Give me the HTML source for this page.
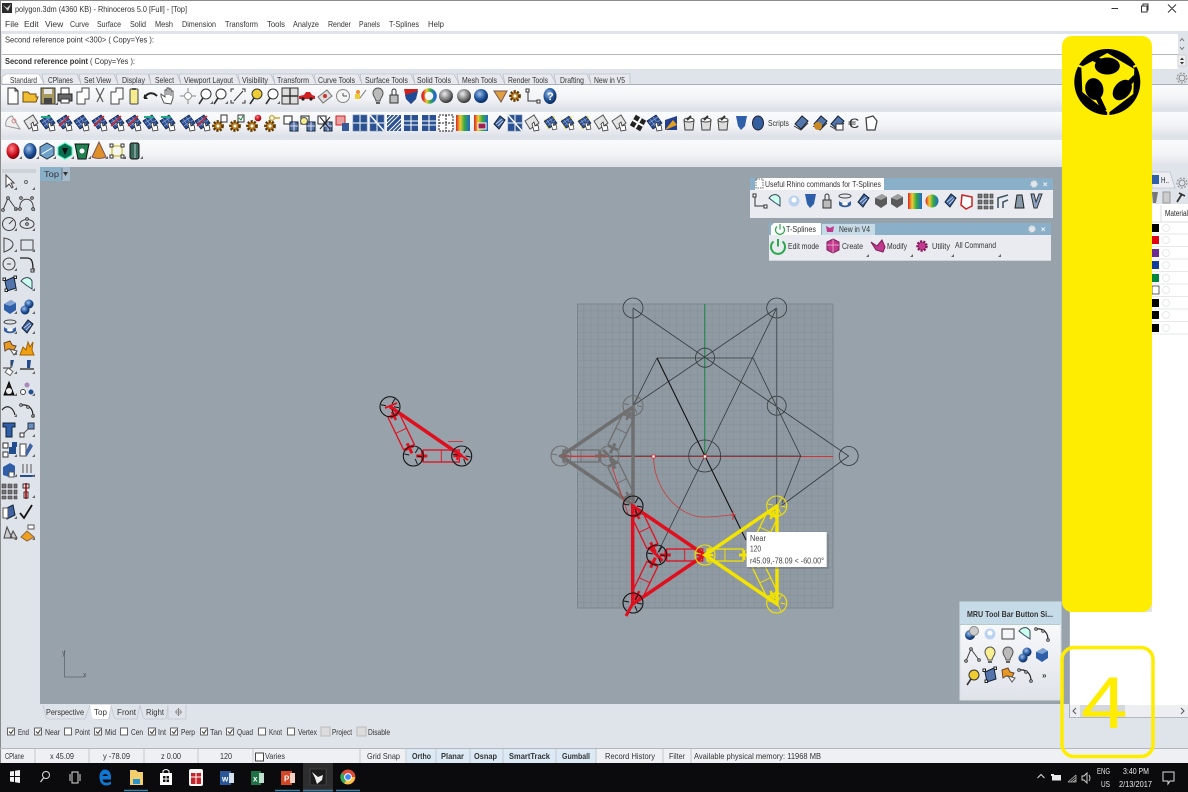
<!DOCTYPE html>
<html lang="en">
<head>
<meta charset="utf-8">
<title>polygon.3dm - Rhinoceros 5.0</title>
<style>
html,body{margin:0;padding:0;background:#dfe3ea;width:1188px;height:792px;overflow:hidden}
svg{display:block;filter:blur(.35px)}
text{font-family:"Liberation Sans",sans-serif;font-size:8.5px;fill:#333}
.b{font-weight:bold}
.w{fill:#e8e8e8}
</style>
</head>
<body>
<svg xmlns="http://www.w3.org/2000/svg" width="1188" height="792" viewBox="0 0 1188 792">
<defs>
<linearGradient id="tb" x1="0" y1="0" x2="0" y2="1"><stop offset="0" stop-color="#fafbfc"/><stop offset=".55" stop-color="#f2f3f6"/><stop offset="1" stop-color="#dce0e7"/></linearGradient>
<linearGradient id="mr" x1="0" y1="0" x2="0" y2="1"><stop offset="0" stop-color="#fff"/><stop offset="1" stop-color="#dfe3ea"/></linearGradient>
<radialGradient id="gs" cx=".4" cy=".35" r=".7"><stop offset="0" stop-color="#eee"/><stop offset=".6" stop-color="#777"/><stop offset="1" stop-color="#222"/></radialGradient>
<radialGradient id="bs" cx=".4" cy=".35" r=".7"><stop offset="0" stop-color="#9cc0ea"/><stop offset=".6" stop-color="#1d4f96"/><stop offset="1" stop-color="#0a2350"/></radialGradient>
<radialGradient id="rs" cx=".4" cy=".35" r=".7"><stop offset="0" stop-color="#f88"/><stop offset=".6" stop-color="#d01020"/><stop offset="1" stop-color="#600"/></radialGradient>
<linearGradient id="rb" x1="0" y1="0" x2="1" y2="0"><stop offset="0" stop-color="#d22"/><stop offset=".3" stop-color="#ec3"/><stop offset=".6" stop-color="#3a4"/><stop offset="1" stop-color="#26c"/></linearGradient>
<pattern id="gp" x="577" y="304" width="7.12" height="7.12" patternUnits="userSpaceOnUse"><path d="M7.12 0V7.12H0" fill="none" stroke="#7f8a93" stroke-width=".8"/></pattern>

<path id="tri" d="M5 8H8V5Z" fill="#666"/>
<g id="doc"><path d="M-5-8H2L5-5V8H-5Z" fill="#fff" stroke="#333"/><path d="M2-8V-5H5" fill="none" stroke="#333"/></g>
<path id="fold" d="M-7 6V-4H-2L0-2H6V1H8L6 6Z" fill="#f0bc30" stroke="#6a4c10"/>
<g id="save"><rect x="-7" y="-8" width="14" height="16" fill="#a79a60" stroke="#333"/><rect x="-4" y="-7" width="8" height="5" fill="#e8e8e8"/><rect x="-4" y="2" width="8" height="6" fill="#444"/><use href="#tri" x="2" y="1"/></g>
<g id="prt"><rect x="-7" y="-2" width="14" height="7" fill="#666" stroke="#222"/><rect x="-4" y="-8" width="8" height="6" fill="#fff" stroke="#333"/><rect x="-4" y="3" width="8" height="4" fill="#fff" stroke="#333"/></g>
<g id="cp2"><path d="M-6-4H2V8H-6Z" fill="#fff" stroke="#444"/><path d="M-1-4V-8H6V3H2" fill="#fff" stroke="#444"/></g>
<path id="cut" d="M-4-8L3 6M4-8L-3 6" stroke="#555" stroke-width="1.200" fill="none"/>
<g id="pst"><rect x="-4" y="-7" width="8" height="15" rx="1" fill="#f6ec90" stroke="#444"/><rect x="-2" y="-8" width="4" height="2" fill="#555"/></g>
<g id="und"><path d="M-7 2C-3-4 2-4 6 0" stroke="#222" stroke-width="2" fill="none"/><path d="M-7-2V3H-3Z" fill="#222"/></g>
<path id="hand" d="M-4 7L-7 0V-2L-3 1V-6H-1V-1 -8H1V-1 -7H3V0 -5H5V2L3 8Z" fill="#fff" stroke="#444" stroke-width=".9"/>
<g id="pan"><path d="M0-8V8M-8 0H8" stroke="#888"/><circle r="3.500" fill="#fff" stroke="#999"/></g>
<g id="mag"><circle cx="1" cy="-2" r="5" fill="#fff" stroke="#333"/><path d="M-2 2L-6 8" stroke="#333" stroke-width="1.600"/><use href="#tri"/></g>
<g id="ext"><path d="M-7-4V-7H-4M4-7H7V-4M7 4V7H4M-4 7H-7V4" stroke="#333" fill="none"/><path d="M-4 5L5-5" stroke="#333"/></g>
<g id="magy"><circle cx="1" cy="-2" r="5" fill="#ec3" stroke="#333"/><path d="M-2 2L-6 8" stroke="#333" stroke-width="1.600"/></g>
<g id="win4"><rect x="-8" y="-8" width="16" height="16" fill="#ddd" stroke="#333"/><path d="M0-8V8M-8 0H8" stroke="#333" stroke-width="1.400"/></g>
<g id="car"><path d="M-8 3V0L-3-1-1-4H3L5-1 8 0V3Z" fill="#d02020"/><circle cx="-4" cy="3" r="1.600" fill="#222"/><circle cx="4" cy="3" r="1.600" fill="#222"/></g>
<g id="flat"><path d="M-7 1L2-6 7 0-2 7Z" fill="#ddd" stroke="#777"/><circle r="2" fill="#c33"/></g>
<g id="clk"><circle r="6.500" fill="#f4f4f4" stroke="#888"/><path d="M0 0H4M0 0V-3" stroke="#555"/></g>
<g id="lit"><rect x="-5" y="-2" width="5" height="5" fill="#ec3"/><path d="M0 2L6-6" stroke="#777"/><circle cx="-2" cy="-4" r="2" fill="#e83"/></g>
<g id="blb"><path d="M-5-3A5 5 0 1 1 5-3C5 1 2 2 2 5H-2C-2 2-5 1-5-3Z" fill="#bbb" stroke="#555"/><path d="M-2 7H2" stroke="#333" stroke-width="1.500"/></g>
<g id="blby"><path d="M-5-3A5 5 0 1 1 5-3C5 1 2 2 2 5H-2C-2 2-5 1-5-3Z" fill="#f8ee90" stroke="#555"/><path d="M-2 7H2" stroke="#333" stroke-width="1.500"/></g>
<g id="lock"><rect x="-4" y="-1" width="8" height="8" fill="#bbb" stroke="#333"/><path d="M-2-1V-5A2 2 0 0 1 2-5V-1" fill="none" stroke="#333"/></g>
<g id="sh"><path d="M-7-7H7L5 3 0 8-5 3Z" fill="#c22"/><path d="M-6-1L7-5 5 3 0 8-5 3Z" fill="#1e4b96"/></g>
<g id="whl"><circle r="6" fill="none" stroke="url(#rb)" stroke-width="3.500"/></g>
<circle id="sph" r="7" fill="url(#gs)"/>
<g id="bsp"><circle r="7" fill="url(#bs)"/></g>
<ellipse id="rsp" rx="6.500" ry="8" fill="url(#rs)"/>
<ellipse id="bsq" rx="6.500" ry="8" fill="url(#bs)"/>
<g id="gear"><circle r="4.500" fill="#b97d20" stroke="#5e3a08" stroke-width="2.800" stroke-dasharray="2 1.300"/><circle r="1.500" fill="#fff"/></g>
<g id="gdoc"><use href="#gear" x="-2" y="3"/><rect x="1" y="-8" width="6" height="7" fill="#fff" stroke="#333"/></g>
<g id="gck"><use href="#gear" x="-2" y="3"/><rect x="1" y="-8" width="6" height="7" fill="#fff" stroke="#333"/><path d="M2-5L4-3 6-7" stroke="#1a8a3a" fill="none"/></g>
<g id="gbl"><use href="#gear" x="-2" y="3"/><circle cx="4" cy="-5" r="3.300" fill="url(#rs)"/></g>
<g id="gky"><use href="#gear" x="-2" y="3"/><circle cx="0" cy="-5" r="2.400" fill="none" stroke="#c9a830" stroke-width="1.300"/><path d="M2-5H8" stroke="#c9a830" stroke-width="1.500"/></g>
<path id="cone" d="M-6-5H7L1 6Z" fill="#e0a040" stroke="#755"/>
<g id="pts"><path d="M-5-5V5H5" stroke="#333" fill="none"/><rect x="-7" y="-7" width="3" height="3" fill="#fff" stroke="#333"/><rect x="4" y="4" width="3" height="3" fill="#fff" stroke="#333"/></g>
<g id="hlp"><ellipse rx="6.500" ry="8" fill="url(#bs)"/></g>
<g id="circ"><path d="M-1-7A8 8 0 0 0-7 3L7 6 -1-7Z" fill="#f0f0f0" stroke="#999"/><circle cx="1" cy="-2" r="2" fill="none" stroke="#d88"/></g>
<g id="srg"><path d="M-7-2L2-8 7 0-2 6Z" fill="#e4e4e4" stroke="#555"/><path d="M0 1L2 8 7 7 6 2 3 3 2-1Z" fill="#fff" stroke="#333" stroke-width=".8"/></g>
<g id="srf"><path d="M-8-2L1-8 7 0-2 6Z" fill="#2c4f96" stroke="#0d1f44" stroke-width=".8"/><path d="M-5-4L1 4M-2-6L4 2M-6 0L3-6M-4 3L5-3" stroke="#9fb6dc" stroke-width=".6"/><path d="M0 1L2 8 7 7 6 2 3 3 2-1Z" fill="#fff" stroke="#333" stroke-width=".8"/></g>
<g id="srr"><use href="#srf"/><path d="M-6 3L4-7" stroke="#d22" stroke-width="1.500"/></g>
<g id="srn"><use href="#srf"/><path d="M-7-6H3" stroke="#2a8" stroke-width="2"/></g>
<g id="sry"><path d="M-7-3L3-7 6 2-3 6Z" fill="#e8de30"/><use href="#srf" transform="scale(.85)"/></g>
<g id="grd"><rect x="-7" y="-8" width="14" height="16" fill="#2a5192" stroke="#6c85b0" stroke-width=".6"/><path d="M0-8V8M-7 0H7" stroke="#fff"/></g>
<g id="grd2"><use href="#grd"/><path d="M-7-8L7 8" stroke="#fff" stroke-width="1.500"/></g>
<g id="grd3"><rect x="-7" y="-8" width="14" height="16" fill="#2a5192"/><path d="M-7-4L-3-8M-7 0L1-8M-7 4L5-8M-5 8L7-4M-1 8L7 0M3 8L7 4" stroke="#fff"/></g>
<g id="grd4"><rect x="-7" y="-8" width="14" height="16" fill="#2a5192"/><path d="M-7-2H7M-7 2H7M0-8V8" stroke="#fff"/></g>
<g id="grd5"><rect x="-7" y="-8" width="14" height="16" fill="#fff" stroke="#222" stroke-dasharray="2 1"/><path d="M0-8V8M-7 0H7" stroke="#222" stroke-dasharray="2 1"/></g>
<rect id="rain" x="-7" y="-8" width="14" height="16" fill="url(#rb)"/>
<g id="rain2"><use href="#rain"/><rect x="-3" y="0" width="8" height="6" fill="#a12050" stroke="#fff"/></g>
<g id="dg"><rect x="-7" y="-7" width="8" height="8" fill="#fff" stroke="#222"/><rect x="-1" y="-1" width="8" height="9" fill="#5474ac" stroke="#123"/><path d="M3-1V8M-1 3H7" stroke="#dde"/></g>
<g id="dgb"><use href="#dg"/><circle cx="-4" cy="-2" r="3.500" fill="#f6ec90" stroke="#555"/></g>
<g id="dgk"><use href="#dg"/><path d="M-5 6L5-6M-5-6L5 6" stroke="#222"/></g>
<g id="dgr"><rect x="-7" y="-7" width="9" height="9" fill="#e8a0a0" stroke="#c22"/><rect x="-1" y="0" width="7" height="8" fill="#345a9c"/></g>
<g id="chk"><rect x="-6" y="-6" width="12" height="12" fill="#222" transform="rotate(30)"/><path d="M-6 0H6M0-6V6" stroke="#fff" stroke-width="2" transform="rotate(30)"/></g>
<g id="fl"><path d="M-6 7V-3L6-7V7Z" fill="#243f90"/><path d="M-6 7L2-3 6 2" fill="#e2a020"/></g>
<g id="bkt"><path d="M-5-3H5L4 7H-4Z" fill="#ddd" stroke="#444"/><ellipse cy="-3" rx="5" ry="2" fill="#fff" stroke="#444"/><path d="M-2-3L2-7" stroke="#333" stroke-width="2"/></g>
<g id="vv"><path d="M-5-7H6L4 3 0 7-3 3Z" fill="#2f5fa8"/></g>
<ellipse id="vo" rx="5.500" ry="7" fill="#345f9f" stroke="#223"/>
<g id="pgn"><path d="M-5-5L2-7 6-2 4 7H-4Z" fill="#fff" stroke="#444" stroke-width="1.300"/></g>
<g id="hex"><path d="M0-8L7-4V4L0 8-7 4V-4Z" fill="#6ea0c8" stroke="#234"/><path d="M-5 3L5-3" stroke="#fff"/></g>
<g id="gsh"><path d="M0-8L7-4V4L0 8-7 4V-4Z" fill="#0e6b50" stroke="#3fb"/><path d="M-3-3H3L0 4Z" fill="#111"/></g>
<g id="gdc"><path d="M-7-7H7L4 8H-4Z" fill="#208050" stroke="#111"/><circle r="2.500" fill="#fff"/></g>
<g id="yrc"><path d="M-5-5H5V5H-5Z" fill="none" stroke="#d8c840" stroke-width="1.500"/><g fill="#fff" stroke="#333"><rect x="-7" y="-7" width="3" height="3"/><rect x="4" y="-7" width="3" height="3"/><rect x="-7" y="4" width="3" height="3"/><rect x="4" y="4" width="3" height="3"/></g></g>
<g id="cyl"><rect x="-4" y="-8" width="9" height="16" rx="2" fill="#3a6a5a" stroke="#111"/><path d="M1-7V7" stroke="#bcd"/></g>
<g id="scr1"><path d="M-6 1L1-7 7-2 0 6Z" fill="#5474ac" stroke="#123"/><path d="M-7 3L0 7 7 0" stroke="#333" fill="none"/></g>
<g id="scr2"><use href="#scr1"/><circle cx="-2" cy="3" r="4" fill="#c98a25"/></g>
<g id="scr3"><use href="#scr1"/><rect x="-1" y="1" width="7" height="6" fill="#fff" stroke="#333"/></g>

<g id="arrow"><path d="M-3-7V5L0 2 3 6 4 5 2 1H5Z" fill="#fff" stroke="#444"/></g>
<g id="pl"><path d="M-7 6L-2-6 6 5" fill="none" stroke="#444"/><g fill="#fff" stroke="#333"><circle cx="-7" cy="6" r="1.300"/><circle cx="-2" cy="-6" r="1.300"/><circle cx="6" cy="5" r="1.300"/></g></g>
<g id="cv"><path d="M-7 5C-9-8 8-8 6 5" fill="none" stroke="#444"/><g fill="#fff" stroke="#333"><circle cx="-7" cy="5" r="1.300"/><circle cx="-6" cy="-6" r="1.300"/><circle cx="5" cy="-6" r="1.300"/><circle cx="6" cy="5" r="1.300"/></g></g>
<g id="cir"><circle r="6.500" fill="none" stroke="#444"/><path d="M0 0L4-4" stroke="#444"/></g>
<g id="ell"><ellipse rx="7" ry="4.500" fill="none" stroke="#444"/><circle r="1.300" fill="#fff" stroke="#333"/><circle cx="0" cy="-5" r="1.300" fill="#fff" stroke="#333"/></g>
<path id="arcc" d="M-6-7C6-5 6 3-6 7Z" fill="none" stroke="#444"/>
<rect id="rct" x="-6" y="-5" width="12" height="10" fill="none" stroke="#444"/>
<g id="cdot"><circle r="6" fill="none" stroke="#444"/><path d="M-2 0H2" stroke="#444"/></g>
<g id="fil"><path d="M-7-6H0C5-6 6-2 6 6" fill="none" stroke="#222" stroke-width="1.300"/><rect x="4" y="5" width="3" height="3" fill="#fff" stroke="#333"/></g>
<g id="sfp"><path d="M-5-3L4-7 6 4-3 7Z" fill="#5474ac" stroke="#123"/><g fill="#fff" stroke="#222"><rect x="-7" y="-6" width="2.500" height="2.500"/><rect x="4" y="-8" width="2.500" height="2.500"/><rect x="-5" y="5" width="2.500" height="2.500"/></g></g>
<g id="sfw"><path d="M-6-3C-2-8 3-7 5-3V5L-1 1Z" fill="#cfe" stroke="#345"/><path d="M-6-3L-1 1 5 5" fill="#4a6ea8"/></g>
<g id="cube"><path d="M-6-3L1-7 6-4V3L0 7-6 3Z" fill="#2f5fa8"/><path d="M-6-3L1-7 6-4 0-1Z" fill="#7ea3d0"/></g>
<g id="spp"><circle cx="2" cy="-3" r="4.500" fill="url(#bs)"/><circle cx="-2" cy="3" r="4.500" fill="url(#bs)"/></g>
<g id="cyb"><ellipse cy="-5" rx="6" ry="2" fill="none" stroke="#444"/><path d="M-6 0V4C-3 7 3 7 6 4V0C3 3-3 3-6 0Z" fill="#345f9f"/><ellipse cy="3" rx="3" ry="1.500" fill="#fff"/></g>
<g id="sbl"><path d="M-5 1L1-7 6-3 0 6Z" fill="#3f63a4" stroke="#123"/><path d="M-3 1L3-4M-1 3L4-2" stroke="#bcd"/></g>
<g id="pz"><path d="M-6-5L0-7 2-3 6-2 4 2-2 1-5 3Z" fill="#e89a20" stroke="#643"/><path d="M0 1L4 7 7 3Z" fill="#fff" stroke="#555"/></g>
<path id="brs" d="M-7 7L-4-1-1 2 1-6 3-1 6-6 5 2 7 7Z" fill="#f0a010" stroke="#a06000"/>
<g id="spl"><path d="M-7 1H1M1-7V1" stroke="#333"/><path d="M1-7H4L2 1Z" fill="#234e8e"/><rect x="-1" y="2" width="6" height="5" fill="#fff" stroke="#666" transform="rotate(35)"/></g>
<g id="spl2"><path d="M-7 2H7" stroke="#333" stroke-width="1.400"/><path d="M0-7H4L3 1H0Z" fill="#234e8e"/></g>
<g id="drk"><path d="M-5 6L0-7 5 6Z" fill="#222" stroke="#000"/><circle cy="2" r="3" fill="#eee"/></g>
<g id="dts"><circle cy="-4" r="2.500" fill="#a8b"/><circle cx="-4" cy="3" r="2.500" fill="#fff" stroke="#444"/><circle cx="4" cy="3" r="2.500" fill="#234e8e"/></g>
<path id="cur" d="M-7 0C-2-6 4-3 6 5" fill="none" stroke="#222" stroke-width="1.200"/>
<g id="cur2"><path d="M-6-5C2-6 6-1 6 6" fill="none" stroke="#222" stroke-width="1.200"/><g fill="#fff" stroke="#333"><circle cx="-6" cy="-5" r="1.300"/><circle cx="1" cy="-3" r="1.300"/><circle cx="6" cy="6" r="1.300"/></g></g>
<path id="tt" d="M-6-7H6V-3H3V7H-3V-3H-6Z" fill="#2f5fa8" stroke="#123"/>
<g id="scl"><path d="M-5 5L4-4" stroke="#555"/><rect x="-7" y="3" width="4" height="4" fill="#fff" stroke="#333"/><rect x="1" y="-7" width="6" height="6" fill="#6a8fc0" stroke="#234"/></g>
<g id="grp"><g fill="#fff" stroke="#333"><rect x="-7" y="-7" width="5" height="5"/><rect x="-7" y="2" width="5" height="5"/></g><rect x="-1" y="-3" width="7" height="7" fill="#234e8e"/><rect x="2" y="-8" width="5" height="5" fill="#234e8e"/></g>
<g id="cpb"><rect x="-7" y="-6" width="6" height="12" fill="#fff" stroke="#444"/><path d="M0 6L6-4 3-7-2 3Z" fill="#3f63a4"/></g>
<g id="cbg"><path d="M-6-3L1-7 6-4V5L0 7-6 5Z" fill="#2f5fa8"/><rect x="0" y="2" width="5" height="5" fill="#fff" stroke="#555"/></g>
<g id="ups"><path d="M-7 5H7L5 7H-7Z" fill="#234e8e"/><path d="M-4 3V-6M0 3V-6M4 3V-6" stroke="#555"/></g>
<path id="arr" d="M-7-7H-3V-3H-7ZM-1-7H3V-3H-1ZM5-7H8V-3H5ZM-7-1H-3V3H-7ZM-1-1H3V3H-1ZM5-1H8V3H5ZM-7 5H-3V8H-7ZM-1 5H3V8H-1ZM5 5H8V8H5Z" fill="#777" stroke="#333" stroke-width=".6"/>
<g id="rth"><path d="M0-8V8" stroke="#d22" stroke-width="2"/><rect x="-3" y="-7" width="6" height="4" fill="none" stroke="#333"/><rect x="-2" y="1" width="4" height="6" fill="none" stroke="#333"/></g>
<g id="bbx"><path d="M-5-3L3-7 5 3-3 7Z" fill="#3f63a4" stroke="#123"/><rect x="-7" y="-4" width="5" height="10" fill="#fff" stroke="#555"/></g>
<path id="ck" d="M-6 1L-2 6 6-7" fill="none" stroke="#111" stroke-width="1.800"/>
<g id="gsh2"><path d="M-6 5L-3-6 2 5ZM0 5L3-2 7 5Z" fill="#ccc" stroke="#444"/></g>
<g id="ord"><path d="M0-2L7 4 0 8-6 4Z" fill="#f0a020" stroke="#864"/><rect x="1" y="-8" width="6" height="4" fill="#fff" stroke="#555"/></g>
<g id="sbb"><circle cx="-2" cy="1" r="5" fill="url(#bs)"/><circle cx="2" cy="-3" r="4.500" fill="#ccc" stroke="#888"/></g>
<g id="sbw"><circle r="5.500" fill="#bcd3f0"/><circle cy="-1" r="2.500" fill="#fff"/></g>
<g id="nd"><circle r="10" fill="none" stroke="currentColor" stroke-width="1.100"/><path d="M-9-2L-4-1M5-8L2-3M4 8L2 3M9 1L4 0" stroke="currentColor" stroke-width="1"/></g>
<g id="am" fill="none" stroke="currentColor"><rect x="10" y="-6" width="36" height="12" stroke-width="1.300"/><path d="M28-6V6" stroke-width=".9"/><path d="M3 0H14" stroke-width="3"/><path d="M9-5V5" stroke-width="2.500"/><path d="M40 0H49" stroke-width="2.500"/><path d="M44-4V4" stroke-width="2"/></g>
<g id="unit"><use href="#am"/><use href="#am" transform="rotate(115.800)"/><use href="#am" transform="rotate(-115.800)"/><path d="M48 0L-24-49V49Z" fill="none" stroke="currentColor" stroke-width="3.500"/><path d="M-6-6L6 6" stroke="currentColor" stroke-width="3"/></g>
</defs>

<!-- chrome -->
<rect width="1188" height="792" fill="#dfe3ea"/>
<rect width="1188" height="31" fill="#fff"/>
<rect width="1188" height="1" fill="#8b8b8b"/>
<rect x="0" y="0" width="1" height="763" fill="#8b8b8b"/>
<rect x="2" y="3" width="10" height="10" fill="#2a2a2a"/><path d="M3 5L7 8 11 4 8 11Z" fill="#ddd"/>
<text x="15" y="12" textLength="172" lengthAdjust="spacingAndGlyphs">polygon.3dm (4360 KB) - Rhinoceros 5.0 [Full] - [Top]</text>
<path d="M1111.500 8.500H1118M1141.500 6H1147V12H1141.500ZM1143 6V4H1148V10H1147M1168 4.500L1176 12.500M1176 4.500L1168 12.500" fill="none" stroke="#333"/>
<text x="5" y="27">File</text><text x="24" y="27">Edit</text><text x="45" y="27">View</text><text x="70" y="27" textLength="19" lengthAdjust="spacingAndGlyphs">Curve</text><text x="97" y="27" textLength="24" lengthAdjust="spacingAndGlyphs">Surface</text><text x="130" y="27" textLength="16" lengthAdjust="spacingAndGlyphs">Solid</text><text x="155" y="27" textLength="18" lengthAdjust="spacingAndGlyphs">Mesh</text><text x="182" y="27" textLength="34" lengthAdjust="spacingAndGlyphs">Dimension</text><text x="225" y="27" textLength="33" lengthAdjust="spacingAndGlyphs">Transform</text><text x="267" y="27" textLength="18" lengthAdjust="spacingAndGlyphs">Tools</text><text x="293" y="27" textLength="26" lengthAdjust="spacingAndGlyphs">Analyze</text><text x="328" y="27" textLength="23" lengthAdjust="spacingAndGlyphs">Render</text><text x="359" y="27" textLength="21" lengthAdjust="spacingAndGlyphs">Panels</text><text x="389" y="27" textLength="30" lengthAdjust="spacingAndGlyphs">T-Splines</text><text x="428" y="27" textLength="16" lengthAdjust="spacingAndGlyphs">Help</text>

<rect x="2" y="34" width="1176" height="20" fill="#fff"/>
<rect x="2" y="54" width="1176" height="1" fill="#b4b8be"/>
<rect x="2" y="55" width="1176" height="14" fill="#fff"/>
<text x="5" y="42.500" textLength="149" lengthAdjust="spacingAndGlyphs">Second reference point &lt;300&gt; ( Copy=Yes ):</text>
<text x="5" y="64" class="b" textLength="83" lengthAdjust="spacingAndGlyphs">Second reference point</text><text x="90" y="64" textLength="45" lengthAdjust="spacingAndGlyphs">( Copy=Yes ):</text>
<path d="M1180 41L1182 38.500 1184 41M1180 47L1182 49.500 1184 47" fill="none" stroke="#777"/>
<rect x="1178" y="55" width="8" height="11" fill="#f0f0f0" stroke="#bbb" stroke-width=".6"/><path d="M1180 60H1184L1182 57.500ZM1180 62H1184L1182 64.500Z" fill="#333"/>

<!-- tabs -->
<path d="M2 84V77L6 74H39L44 84Z" fill="#fff" stroke="#b0b6c0" stroke-width=".6"/>
<path d="M44 84L42 74H77L81 84M81 84L79 74H114L118 84M118 84L116 74H148L151 84M151 84L149 74H177L181 84M181 84L179 74H236L240 84M240 84L238 74H271L275 84M275 84L273 74H312L316 84M316 84L314 74H358L362 84M362 84L360 74H411L415 84M415 84L413 74H454L459 84M459 84L457 74H500L505 84M505 84L503 74H551L556 84M556 84L554 74H587L591 84M591 84L589 74H630V84" fill="#e7e9ee" stroke="#b0b6c0" stroke-width=".6"/>
<rect x="0" y="84" width="1188" height="1" fill="#a9b0ba"/>
<text x="10" y="83" textLength="27" lengthAdjust="spacingAndGlyphs">Standard</text><text x="48" y="83" textLength="25" lengthAdjust="spacingAndGlyphs">CPlanes</text><text x="84" y="83" textLength="27" lengthAdjust="spacingAndGlyphs">Set View</text><text x="122" y="83" textLength="23" lengthAdjust="spacingAndGlyphs">Display</text><text x="155" y="83" textLength="19" lengthAdjust="spacingAndGlyphs">Select</text><text x="184" y="83" textLength="49" lengthAdjust="spacingAndGlyphs">Viewport Layout</text><text x="242" y="83" textLength="26" lengthAdjust="spacingAndGlyphs">Visibility</text><text x="277" y="83" textLength="32" lengthAdjust="spacingAndGlyphs">Transform</text><text x="318" y="83" textLength="37" lengthAdjust="spacingAndGlyphs">Curve Tools</text><text x="365" y="83" textLength="43" lengthAdjust="spacingAndGlyphs">Surface Tools</text><text x="417" y="83" textLength="34" lengthAdjust="spacingAndGlyphs">Solid Tools</text><text x="462" y="83" textLength="35" lengthAdjust="spacingAndGlyphs">Mesh Tools</text><text x="508" y="83" textLength="40" lengthAdjust="spacingAndGlyphs">Render Tools</text><text x="560" y="83" textLength="24" lengthAdjust="spacingAndGlyphs">Drafting</text><text x="594" y="83" textLength="31" lengthAdjust="spacingAndGlyphs">New in V5</text>
<g transform="translate(1182 78)" fill="none" stroke="#888"><circle r="3" /><circle r="5" stroke-dasharray="2 1.500"/></g>

<!-- toolbar rows -->
<rect x="1" y="85" width="1187" height="25" fill="url(#tb)"/>
<rect x="1" y="112" width="1187" height="25" fill="url(#tb)"/>
<rect x="1" y="140" width="1187" height="27" fill="url(#tb)"/>

<g transform="translate(0 96)">
<use href="#doc" x="13"/><use href="#fold" x="30"/><use href="#save" x="48"/><use href="#prt" x="65"/><use href="#cp2" x="83"/><use href="#cut" x="100"/><use href="#cp2" x="117"/><use href="#pst" x="134"/><use href="#und" x="151"/><use href="#hand" x="168"/><use href="#pan" x="188"/><use href="#mag" x="205"/><use href="#mag" x="220"/><use href="#ext" x="238"/><use href="#magy" x="256"/><use href="#mag" x="272"/><use href="#win4" x="290"/><use href="#car" x="307"/><use href="#flat" x="325"/><use href="#clk" x="343"/><use href="#lit" x="360"/><use href="#blb" x="378"/><use href="#lock" x="394"/><use href="#sh" x="411"/><use href="#whl" x="429"/><use href="#sph" x="446"/><use href="#sph" x="464"/><use href="#bsp" x="481"/><use href="#cone" x="500"/><use href="#gear" x="515" transform="translate(0 0)"/><use href="#pts" x="533"/><use href="#hlp" x="550"/>
</g>
<text x="547" y="100" style="font-size:11px;font-weight:bold;fill:#fff">?</text>
<g transform="translate(0 123)">
<use href="#circ" x="13"/><use href="#srg" x="31"/><use href="#srn" x="48"/><use href="#srr" x="65"/><use href="#srf" x="82"/><use href="#srr" x="100"/><use href="#srr" x="117"/><use href="#srr" x="134"/><use href="#srn" x="151"/><use href="#srn" x="168"/><use href="#srf" x="188"/><use href="#srr" x="203"/><use href="#gdoc" x="220"/><use href="#gck" x="237"/><use href="#gbl" x="254"/><use href="#gky" x="272"/><use href="#dg" x="291"/><use href="#dgb" x="308"/><use href="#dgk" x="325"/><use href="#dgr" x="343"/><use href="#grd" x="360"/><use href="#grd2" x="377"/><use href="#grd3" x="394"/><use href="#grd4" x="411"/><use href="#grd4" x="429"/><use href="#grd5" x="446"/><use href="#rain" x="463"/><use href="#rain2" x="481"/><use href="#sbl" x="499"/><use href="#grd2" x="515"/><use href="#srg" x="532"/><use href="#sry" x="551"/><use href="#sry" x="568"/><use href="#sry" x="585"/><use href="#srg" x="601"/><use href="#srg" x="619"/><use href="#chk" x="638"/><use href="#srf" x="655"/><use href="#fl" x="671"/><use href="#bkt" x="689"/><use href="#bkt" x="706"/><use href="#bkt" x="723"/><use href="#vv" x="741"/><use href="#vo" x="758"/><use href="#scr1" x="801"/><use href="#scr2" x="820"/><use href="#scr3" x="837"/><use href="#pgn" x="871"/>
</g>
<text x="768" y="126" textLength="21" lengthAdjust="spacingAndGlyphs">Scripts</text>
<text x="848" y="128" style="font-size:14px" textLength="11" lengthAdjust="spacingAndGlyphs">€</text>
<g transform="translate(0 151)">
<use href="#rsp" x="13"/><use href="#bsq" x="30"/><use href="#hex" x="47"/><use href="#gsh" x="65"/><use href="#gdc" x="82"/><path d="M99-9L106 6Q99 9 92 6Z" fill="#e0902a" stroke="#755"/><use href="#yrc" x="117"/><use href="#cyl" x="134"/>
<path d="M19 8h3v-3zM36 8h3v-3zM53 8h3v-3zM71 8h3v-3zM88 8h3v-3zM105 8h3v-3zM123 8h3v-3zM140 8h3v-3z" fill="#666"/>
</g>

<!-- viewport -->
<rect x="40" y="167" width="1030" height="537" fill="#98a2ab"/>
<rect x="40" y="167" width="22" height="14" fill="#8aafc9"/><rect x="62" y="167" width="8" height="14" fill="#a6bccd"/>
<text x="44" y="177" textLength="15" lengthAdjust="spacingAndGlyphs">Top</text><path d="M63 172H68L65.500 176Z" fill="#333"/><path d="M62 168V180" stroke="#555" stroke-width=".6"/>

<!-- left toolbar -->
<rect x="1" y="167" width="39" height="536" fill="#dfe3ea"/>
<rect x="2" y="169" width="34" height="4" fill="#cdd1d8"/>
<g>
<use href="#arrow" x="9" y="182"/><circle cx="26" cy="182" r="1.500" fill="none" stroke="#666"/>
<use href="#pl" x="10" y="204"/><use href="#cv" x="27" y="204"/>
<use href="#cir" x="9" y="224"/><use href="#ell" x="27" y="224"/>
<use href="#arcc" x="10" y="245"/><use href="#rct" x="27" y="245"/>
<use href="#cdot" x="9" y="264"/><use href="#fil" x="27" y="264"/>
<use href="#sfp" x="10" y="284"/><use href="#sfw" x="27" y="284"/>
<use href="#cube" x="10" y="307"/><use href="#spp" x="27" y="307"/>
<use href="#cyb" x="10" y="327"/><use href="#sbl" x="27" y="327"/>
<use href="#pz" x="10" y="348"/><use href="#brs" x="27" y="348"/>
<use href="#spl" x="10" y="367"/><use href="#spl2" x="27" y="367"/>
<use href="#drk" x="9" y="389"/><use href="#dts" x="27" y="389"/>
<use href="#cur" x="9" y="410"/><use href="#cur2" x="27" y="410"/>
<use href="#tt" x="9" y="430"/><use href="#scl" x="27" y="430"/>
<use href="#grp" x="10" y="450"/><use href="#cpb" x="27" y="450"/>
<use href="#cbg" x="9" y="470"/><use href="#ups" x="27" y="470"/>
<use href="#arr" x="9" y="491"/><use href="#rth" x="26" y="491"/>
<use href="#bbx" x="10" y="512"/><use href="#ck" x="26" y="512"/>
<use href="#gsh2" x="10" y="533"/><use href="#ord" x="27" y="533"/>
</g>
<g fill="#666"><path d="M14 190h3v-3zM32 190h3v-3zM14 211h3v-3zM32 211h3v-3zM14 231h3v-3zM32 231h3v-3zM14 252h3v-3zM32 252h3v-3zM14 271h3v-3zM32 271h3v-3zM14 291h3v-3zM32 291h3v-3zM14 314h3v-3zM32 314h3v-3zM14 334h3v-3zM32 334h3v-3zM14 355h3v-3zM14 374h3v-3zM32 374h3v-3zM14 396h3v-3zM32 396h3v-3zM14 417h3v-3zM32 417h3v-3zM32 437h3v-3zM14 457h3v-3zM32 457h3v-3zM14 477h3v-3zM32 477h3v-3zM14 498h3v-3zM32 498h3v-3zM14 519h3v-3zM14 540h3v-3zM32 540h3v-3z"/></g>

<!-- world axes -->
<path d="M64.500 650V677H85" fill="none" stroke="#5f6870" stroke-width=".8"/>
<text x="62" y="655" style="font-size:7px;fill:#555">y</text><text x="83" y="677" style="font-size:7px;fill:#555">x</text>

<!-- grid -->
<rect x="577" y="304" width="256" height="304" fill="#909aa3"/>
<rect x="577" y="304" width="256" height="304" fill="url(#gp)"/>
<path d="M577.500 304V608M833 304V608M577 304H833M577 608H833" stroke="#7b858e" fill="none"/>
<path d="M704.700 304V456" stroke="#2e8b57" stroke-width="1.300"/>
<path d="M562 456.500H833" stroke="#d83030" stroke-width=".9"/>

<!-- star -->
<g fill="none" stroke="#33383d" stroke-width=".8">
<path d="M633 308L848.700 456 781 506M776.700 308L633 405.700M776.700 308L656.700 555M657 358H753L800.700 456 782 503M657 358L633 405.700M609 456H800.700"/>
<circle cx="633" cy="308" r="10"/><circle cx="776.700" cy="308" r="10"/><circle cx="705" cy="357.700" r="9.500"/><circle cx="776.700" cy="405.700" r="9.500"/><circle cx="848.700" cy="456" r="9.500"/><circle cx="704.700" cy="456" r="16"/>
<path d="M633 308V405M776.700 308V506" stroke="#50565c" stroke-width="1.100"/>
</g>
<path d="M657 358L746 540" stroke="#111" stroke-width="1.100" fill="none"/>
<path d="M653.500 456C653.500 490 680 518 705 517C717 517 727 515 733 515" fill="none" stroke="#cc3a3a" stroke-width=".8"/>
<rect x="652" y="455" width="3" height="3" fill="#fff" stroke="#d22" stroke-width=".7"/><rect x="703.500" y="455" width="3" height="3" fill="#fff" stroke="#d22" stroke-width=".7"/>
<path d="M733 511V520M730 515H736" stroke="#c33"/>

<!-- units -->
<g style="color:#6f6f6f"><use href="#unit" transform="translate(609 456) rotate(180)"/><use href="#nd" x="561" y="456"/><use href="#nd" x="609" y="456"/><use href="#nd" x="633" y="405.700"/></g>
<path d="M562 456H606M628 514L612 467" stroke="#d83030" stroke-width=".8"/>
<g style="color:#e00f1e"><use href="#unit" transform="translate(656.700 555)"/></g>
<g style="color:#111"><use href="#nd" x="633" y="506"/><use href="#nd" x="656.700" y="555"/><use href="#nd" x="633" y="603"/></g>
<g style="color:#f2e300"><use href="#unit" transform="translate(753 555) rotate(180)"/><use href="#nd" x="705" y="555"/><use href="#nd" x="776.700" y="506"/><use href="#nd" x="776.700" y="603"/></g>
<path d="M633 603L626 616" stroke="#e00f1e" stroke-width="3"/>

<!-- tooltip -->
<rect x="748" y="534" width="81" height="35" fill="#6f767c" opacity=".5"/>
<rect x="746.700" y="532" width="80" height="35" fill="#fff"/>
<text x="750" y="541" style="fill:#444" textLength="16" lengthAdjust="spacingAndGlyphs">Near</text>
<text x="750" y="551.500" style="fill:#444" textLength="11" lengthAdjust="spacingAndGlyphs">120</text>
<text x="750" y="563.500" style="fill:#444" textLength="74" lengthAdjust="spacingAndGlyphs">r45.09,-78.09   &lt; -60.00°</text>

<!-- left small part -->
<g style="color:#e00f1e">
<use href="#am" transform="translate(413.300 456)"/>
<use href="#am" transform="translate(413.300 456) rotate(-115.800)"/>
<path d="M390 406.700L461.700 456" stroke="currentColor" stroke-width="3.500"/>
<path d="M448 441.500H463" stroke="currentColor" stroke-width=".7"/>
<path d="M385 408L397 403M456 452L468 460" stroke="currentColor" stroke-width="2"/>
</g>
<g style="color:#161616"><use href="#nd" x="390" y="406.700"/><use href="#nd" x="413.300" y="456"/><use href="#nd" x="461.700" y="456"/></g>

<!-- floating toolbar 1 -->
<rect x="750" y="178" width="303" height="12" fill="#8aafc9"/>
<path d="M755 190V181L758 178H884V190Z" fill="#fff"/>
<rect x="750" y="190" width="303" height="28" fill="#e9ebf0"/>
<text x="765" y="187" textLength="116" lengthAdjust="spacingAndGlyphs">Useful Rhino commands for T-Splines</text>
<rect x="756" y="179" width="7" height="9" fill="none" stroke="#666" stroke-dasharray="1.500 1"/>
<circle cx="1034" cy="184" r="3" fill="#e0e6ec" stroke="#ddd" stroke-dasharray="1.500 1" stroke-width="1.500"/>
<path d="M1043.500 182.500L1047 186M1047 182.500L1043.500 186" stroke="#e8eef4"/>
<g transform="translate(0 201)">
<use href="#pts" x="760"/><use href="#sfw" x="775"/><use href="#sbw" x="794"/><use href="#vv" x="810"/><use href="#lock" x="827"/><use href="#cyb" x="845"/><use href="#sbl" x="863"/><use href="#cube" x="881" style="filter:grayscale(1)"/><use href="#cube" x="897" style="filter:grayscale(1)"/><use href="#rain" x="915"/><circle cx="932" r="6.500" fill="url(#rb)"/><use href="#sbl" x="950"/><path d="M962-6L972-4V5L966 8 961 4Z" fill="#fff" stroke="#c22" stroke-width="1.500"/><use href="#arr" x="985"/><path d="M998 7V-3L1008-6M1003 7V1L1008-1" fill="none" stroke="#456" stroke-width="1.600"/><path d="M1015 7L1017-6H1022L1024 7Z" fill="#8899aa" stroke="#222"/><path d="M1031-7L1034 7H1037L1042-7H1039L1036 1 1034-7Z" fill="#8fa6c8" stroke="#333"/>
</g>

<!-- floating toolbar 2 -->
<rect x="769" y="223" width="282" height="12" fill="#8aafc9"/>
<path d="M771 235V226L774 223H821V235Z" fill="#fff"/>
<path d="M822 235V224H875V235Z" fill="#c6dbe8"/>
<rect x="769" y="235" width="282" height="25.700" fill="#e9ebf0"/>
<g fill="none" stroke="#2aa84a"><path d="M777 226.500A4.500 4.500 0 1 0 783 226.500" stroke-width="1.200"/><path d="M780 224V229.500" stroke-width="1.200"/><path d="M773.500 241.500A7 7 0 1 0 782.500 241.500" stroke-width="2"/><path d="M778 239V246.500" stroke-width="2"/></g>
<text x="786" y="232" textLength="30" lengthAdjust="spacingAndGlyphs">T-Splines</text>
<path d="M826 226L830 228 834 226 833 232H827Z" fill="#c23a8e"/>
<text x="839" y="232" textLength="31" lengthAdjust="spacingAndGlyphs">New in V4</text>
<circle cx="1032" cy="229" r="3" fill="#e0e6ec" stroke="#ddd" stroke-dasharray="1.500 1" stroke-width="1.500"/>
<path d="M1041.500 227.500L1045 231M1045 227.500L1041.500 231" stroke="#e8eef4"/>
<text x="788" y="249" textLength="31" lengthAdjust="spacingAndGlyphs">Edit mode</text><text x="842" y="249" textLength="21" lengthAdjust="spacingAndGlyphs">Create</text><text x="887" y="249" textLength="20" lengthAdjust="spacingAndGlyphs">Modify</text><text x="932" y="249" textLength="18" lengthAdjust="spacingAndGlyphs">Utility</text><text x="955" y="248" textLength="41" lengthAdjust="spacingAndGlyphs">All Command</text>
<path d="M833 239L839 242V250L833 253 827 250V242Z" fill="#c23a8e" stroke="#7a1d58"/><path d="M833 239V253M827 245H839" stroke="#f4c0de" stroke-width=".7"/>
<path d="M871 242L877 246 882 240 885 247 883 252 876 250Z" fill="#c23a8e" stroke="#7a1d58"/>
<circle cx="922" cy="246" r="4.500" fill="#c23a8e" stroke="#7a1d58" stroke-width="2.500" stroke-dasharray="2 1.200"/>
<path d="M866 257h3v-3zM910 257h3v-3zM951 257h3v-3zM998 257h3v-3z" fill="#666"/>

<!-- MRU panel -->
<rect x="960" y="602" width="101" height="98" fill="url(#mr)" stroke="#d8dde3"/>
<rect x="960" y="602" width="101" height="22" fill="#c6dbe8"/>
<rect x="960" y="624" width="100" height="1" fill="#8aa" opacity=".6"/>
<text x="967" y="617" class="b" textLength="86" lengthAdjust="spacingAndGlyphs">MRU Tool Bar Button Si...</text>
<use href="#sbb" x="972" y="634"/><use href="#sbw" x="990" y="634"/><use href="#rct" x="1008" y="634"/><use href="#sfw" x="1025" y="634"/><use href="#cur2" x="1042" y="634"/>
<use href="#pl" x="973" y="655"/><use href="#blby" x="990" y="655"/><use href="#blb" x="1008" y="655"/><use href="#spp" x="1025" y="655"/><use href="#cube" x="1042" y="655"/>
<use href="#magy" x="973" y="677"/><use href="#sfp" x="990" y="675"/><use href="#pz" x="1008" y="675"/><use href="#cur2" x="1025" y="675"/>
<text x="1042" y="678" class="b" style="font-size:8px">»</text>

<!-- right panel -->
<rect x="1069" y="167" width="119" height="550" fill="#dfe3ea"/>
<rect x="1069" y="612" width="119" height="93" fill="#fff"/>
<rect x="1069" y="612" width="1" height="106" fill="#aab0b8"/>
<rect x="1070" y="705" width="118" height="12" fill="#eceef1"/>
<rect x="1080" y="705" width="45" height="12" fill="#d4d7dc"/>
<rect x="1069" y="717" width="119" height="1" fill="#b4b8be"/>
<path d="M1076 708L1073 711 1076 714M1181 708L1184 711 1181 714" fill="none" stroke="#555"/>
<path d="M1152 172H1170L1175 188H1152Z" fill="#eceef2" stroke="#b0b6c0" stroke-width=".6"/>
<rect x="1152" y="175" width="7" height="9" fill="#2f5fa8"/>
<text x="1161" y="183" style="fill:#222" textLength="8" lengthAdjust="spacingAndGlyphs">H..</text>
<g transform="translate(1182 183)" fill="none" stroke="#888"><circle r="3"/><circle r="5" stroke-dasharray="2 1.500"/></g>
<rect x="1152" y="204" width="36" height="408" fill="#fff"/>
<path d="M1152 192H1158L1156 203H1153Z" fill="#777"/><rect x="1163" y="192" width="7" height="11" fill="#ccc" stroke="#999"/><path d="M1177 202L1182 194M1179 193L1185 196" stroke="#333" stroke-width="1.800"/>
<text x="1165" y="216" style="fill:#222" textLength="23" lengthAdjust="spacingAndGlyphs">Material</text>
<path d="M1161 205V222M1152 222H1188" stroke="#ddd" fill="none"/>
<g stroke="#e6e8ea" fill="none"><path d="M1152 234H1188M1152 246.500H1188M1152 259H1188M1152 271.500H1188M1152 284H1188M1152 296.500H1188M1152 309H1188M1152 321.500H1188M1152 334H1188"/>
<circle cx="1166" cy="228" r="3.500"/><circle cx="1166" cy="240" r="3.500"/><circle cx="1166" cy="253" r="3.500"/><circle cx="1166" cy="265" r="3.500"/><circle cx="1166" cy="278" r="3.500"/><circle cx="1166" cy="290" r="3.500"/><circle cx="1166" cy="303" r="3.500"/><circle cx="1166" cy="315" r="3.500"/><circle cx="1166" cy="328" r="3.500"/></g>
<rect x="1152" y="224" width="7" height="8" fill="#000"/><rect x="1152" y="236" width="7" height="8" fill="#e00010"/><rect x="1152" y="249" width="7" height="8" fill="#6a2c91"/><rect x="1152" y="261" width="7" height="8" fill="#0f3f9a"/><rect x="1152" y="274" width="7" height="8" fill="#00853e"/><rect x="1152" y="286" width="7" height="8" fill="#fff" stroke="#222" stroke-width=".7"/><rect x="1152" y="299" width="7" height="8" fill="#000"/><rect x="1152" y="311" width="7" height="8" fill="#000"/><rect x="1152" y="324" width="7" height="8" fill="#000"/>

<!-- viewport tabs -->
<path d="M43 705L46 717Q47 719 50 719H85L90 705M90 705L93 717Q94 719 96 719H109L111 705M111 705L114 717Q115 719 117 719H137L140 705M140 705L143 717Q144 719 146 719H166L168 705M168 705V719H186V705" fill="none" stroke="#c3c8d0" stroke-width=".8"/>
<path d="M90 705L92 717Q93 719 96 719H108L111 705Z" fill="#fff"/>
<text x="46" y="715" textLength="38" lengthAdjust="spacingAndGlyphs">Perspective</text><text x="94" y="715" textLength="13" lengthAdjust="spacingAndGlyphs">Top</text><text x="117" y="715" textLength="19" lengthAdjust="spacingAndGlyphs">Front</text><text x="146" y="715" textLength="18" lengthAdjust="spacingAndGlyphs">Right</text>
<path d="M178.500 708V716M175 712H182" stroke="#888"/><circle cx="178.500" cy="712" r="2.500" fill="none" stroke="#999"/>

<!-- osnaps -->
<g fill="#fff" stroke="#555" stroke-width=".9">
<rect x="7.500" y="728" width="7" height="7"/><rect x="34.500" y="728" width="7" height="7"/><rect x="64.500" y="728" width="7" height="7"/><rect x="94.500" y="728" width="7" height="7"/><rect x="120.500" y="728" width="7" height="7"/><rect x="148.500" y="728" width="7" height="7"/><rect x="170.500" y="728" width="7" height="7"/><rect x="200.500" y="728" width="7" height="7"/><rect x="226.500" y="728" width="7" height="7"/><rect x="258.500" y="728" width="7" height="7"/><rect x="287.500" y="728" width="7" height="7"/>
</g>
<rect x="321" y="727" width="9" height="9" fill="#dcdcdc" stroke="#bbb"/><rect x="357" y="727" width="9" height="9" fill="#dcdcdc" stroke="#bbb"/>
<path d="M9 731.500L11 733.500 13.500 729.500M36 731.500L38 733.500 40.500 729.500M96 731.500L98 733.500 100.500 729.500M150 731.500L152 733.500 154.500 729.500M172 731.500L174 733.500 176.500 729.500M202 731.500L204 733.500 206.500 729.500M228 731.500L230 733.500 232.500 729.500" fill="none" stroke="#333"/>
<text x="18" y="735" textLength="11" lengthAdjust="spacingAndGlyphs">End</text><text x="45" y="735" textLength="15" lengthAdjust="spacingAndGlyphs">Near</text><text x="75" y="735" textLength="15" lengthAdjust="spacingAndGlyphs">Point</text><text x="105" y="735" textLength="11" lengthAdjust="spacingAndGlyphs">Mid</text><text x="131" y="735" textLength="12" lengthAdjust="spacingAndGlyphs">Cen</text><text x="158" y="735" textLength="8" lengthAdjust="spacingAndGlyphs">Int</text><text x="181" y="735" textLength="14" lengthAdjust="spacingAndGlyphs">Perp</text><text x="210" y="735" textLength="12" lengthAdjust="spacingAndGlyphs">Tan</text><text x="237" y="735" textLength="16" lengthAdjust="spacingAndGlyphs">Quad</text><text x="269" y="735" textLength="13" lengthAdjust="spacingAndGlyphs">Knot</text><text x="298" y="735" textLength="19" lengthAdjust="spacingAndGlyphs">Vertex</text><text x="332" y="735" textLength="20" lengthAdjust="spacingAndGlyphs">Project</text><text x="368" y="735" textLength="22" lengthAdjust="spacingAndGlyphs">Disable</text>

<!-- status bar -->
<rect x="1" y="748" width="1187" height="15" fill="#eef0f4"/>
<rect x="0" y="748" width="1188" height="1" fill="#b4b8be"/>
<rect x="407" y="749" width="189" height="14" fill="#dceaf5"/>
<path d="M35 749V763M89 749V763M144 749V763M198 749V763M253 749V763M360 749V763M406 749V763M436 749V763M470 749V763M503 749V763M556 749V763M596 749V763M663 749V763M691 749V763" stroke="#c4c8ce"/>
<text x="5" y="759" textLength="19" lengthAdjust="spacingAndGlyphs">CPlane</text><text x="50" y="759" textLength="24" lengthAdjust="spacingAndGlyphs">x 45.09</text><text x="103" y="759" textLength="27" lengthAdjust="spacingAndGlyphs">y -78.09</text><text x="161" y="759" textLength="20" lengthAdjust="spacingAndGlyphs">z 0.00</text><text x="220" y="759" textLength="12" lengthAdjust="spacingAndGlyphs">120</text>
<rect x="255.500" y="753" width="8" height="8" fill="#fff" stroke="#444"/><text x="265" y="759" textLength="20" lengthAdjust="spacingAndGlyphs">Varies</text>
<text x="367" y="759" textLength="33" lengthAdjust="spacingAndGlyphs">Grid Snap</text>
<text x="412" y="759" style="font-weight:bold" textLength="19" lengthAdjust="spacingAndGlyphs">Ortho</text><text x="441" y="759" style="font-weight:bold" textLength="23" lengthAdjust="spacingAndGlyphs">Planar</text><text x="474" y="759" style="font-weight:bold" textLength="23" lengthAdjust="spacingAndGlyphs">Osnap</text><text x="509" y="759" style="font-weight:bold" textLength="41" lengthAdjust="spacingAndGlyphs">SmartTrack</text><text x="562" y="759" style="font-weight:bold" textLength="28" lengthAdjust="spacingAndGlyphs">Gumball</text>
<text x="605" y="759" textLength="50" lengthAdjust="spacingAndGlyphs">Record History</text><text x="669" y="759" textLength="16" lengthAdjust="spacingAndGlyphs">Filter</text><text x="694" y="759" textLength="127" lengthAdjust="spacingAndGlyphs">Available physical memory: 11968 MB</text>

<!-- taskbar -->
<rect x="0" y="763" width="1188" height="29" fill="#0b0b0d"/>
<rect x="303" y="763" width="30" height="29" fill="#2d2d2f"/>
<path d="M124 790.500H148M275 790.500H300M303 790.500H333M336 790.500H360" stroke="#3a7fa6" stroke-width="1.400"/>
<path d="M10 771.500L14 771V776H10ZM15 770.800L20 770V776H15ZM10 777H14V782L10 781.500ZM15 777H20V783L15 782.200Z" fill="#f2f2f2"/>
<circle cx="46" cy="775" r="3.500" fill="none" stroke="#ddd"/><path d="M43.500 778L40.500 782" stroke="#ddd" stroke-width="1.200"/>
<path d="M72 772H78V783H72ZM70 774V781M80 774V781" fill="none" stroke="#ddd"/>
<path d="M100 777H111C111 772 108 769.500 105 769.500C101.500 769.500 99.500 773 99.500 777C99.500 782 102 785.500 106 785.500C108 785.500 110 785 111 784V781.500C107 783.500 103 783 102.500 779.500H111V777ZM102.500 776C103 773.500 107.500 773.500 108 776Z" fill="#0f78d4"/>
<path d="M130 770H136L138 772H143V785H130Z" fill="#f1cf6c"/><rect x="133" y="779" width="7" height="5" fill="#2a92c6"/>
<rect x="160" y="773" width="12" height="12" fill="#fff"/><path d="M163 773V771Q166 768 169 771V773" fill="none" stroke="#fff"/><path d="M163 776H165.500V778.500H163ZM166.500 776H169V778.500H166.500ZM163 779.500H165.500V782H163ZM166.500 779.500H169V782H166.500Z" fill="#111"/>
<rect x="189" y="769" width="14" height="17" rx="2" fill="#f5f5f5"/><path d="M191 773H201V784H191Z" fill="#c4262e"/><path d="M196 772V785M191 777H201" stroke="#fff"/>
<path d="M220 771H231V785H220Z" fill="#2b579a"/><path d="M229 773H234V783H229" fill="#d5e0ef"/><text x="222" y="781.500" class="w" style="font-size:8px;font-weight:bold;fill:#fff">w</text>
<path d="M251 771H261V785H251Z" fill="#1e7145"/><path d="M259 773H264V783H259" fill="#bfe0cc"/><text x="253" y="781.500" style="font-size:8px;font-weight:bold;fill:#fff">x</text>
<path d="M281 771H292V785H281Z" fill="#d24726"/><path d="M290 773H295V783H290" fill="#f4cfc4"/><text x="284" y="781.500" style="font-size:8px;font-weight:bold;fill:#fff">P</text>
<path d="M310 769H326V785H310Z" fill="#1c1c1c" stroke="#555" stroke-width=".6"/><path d="M312 772L318 777 323 775 322 780 317 784 315 778Z" fill="#eee"/>
<circle cx="348" cy="777" r="7.500" fill="#dd4b39"/><path d="M348 777L355 777A7.500 7.500 0 0 1 344 783.500Z" fill="#f7c948"/><path d="M344 783.500A7.500 7.500 0 0 1 341.500 773L348 777Z" fill="#3aa757"/><circle cx="348" cy="777" r="3.400" fill="#4285f4" stroke="#fff"/>
<path d="M1037.500 778L1041 774.500 1044.500 778" fill="none" stroke="#ddd"/>
<rect x="1052" y="775" width="9" height="5.500" fill="#e8e8e8"/><rect x="1051" y="774" width="3" height="2" fill="#e8e8e8"/>
<path d="M1068 782L1076 775M1070.500 782L1076 777.500M1073 782L1076 780M1068 782H1076V775" fill="none" stroke="#bbb" stroke-width=".8"/>
<path d="M1082 776H1084L1087 773V783L1084 780H1082ZM1089 775Q1091 778 1089 781" fill="none" stroke="#ddd" stroke-width=".9"/>
<text x="1097" y="774" class="w" textLength="13" lengthAdjust="spacingAndGlyphs">ENG</text><text x="1101" y="787" class="w" textLength="9" lengthAdjust="spacingAndGlyphs">US</text>
<text x="1123" y="774" class="w" textLength="26" lengthAdjust="spacingAndGlyphs">3:40 PM</text><text x="1119" y="787" class="w" textLength="33" lengthAdjust="spacingAndGlyphs">2/13/2017</text>
<path d="M1163 772H1174V781H1170L1168 784V781H1163Z" fill="none" stroke="#ddd"/>

<!-- yellow overlays -->
<rect x="1062" y="36" width="90" height="576" rx="10" fill="#ffed00"/>
<g transform="translate(1107.300 82)">
<circle r="33" fill="#000"/>
<path d="M0-29L27-13 26 12 1 31-25 10-26-15-9-24Z" fill="#ffed00"/>
<path d="M26-15L34-19M1 30V36M-25-15L-34-18" stroke="#ffed00" stroke-width="2.200"/>
<ellipse cx="0" cy="-16" rx="12.500" ry="8.500" fill="#000"/><path d="M-2-18L-16-25" stroke="#000" stroke-width="6"/>
<ellipse cx="-13" cy="7" rx="9" ry="11" transform="rotate(-15 -13 7)" fill="#000"/><path d="M-12 10L-3 29" stroke="#000" stroke-width="5"/>
<ellipse cx="15" cy="8" rx="11.500" ry="8" transform="rotate(-50 15 8)" fill="#000"/><path d="M15 8L28-5" stroke="#000" stroke-width="5"/>
</g>
<rect x="1062" y="647.500" width="91" height="109" rx="12" fill="none" stroke="#ffed00" stroke-width="3.500"/>
<text transform="translate(1081 728) scale(1.150 1)" x="0" y="0" style="font-size:73px;fill:#ffed00">4</text>
</svg>
</body>
</html>
